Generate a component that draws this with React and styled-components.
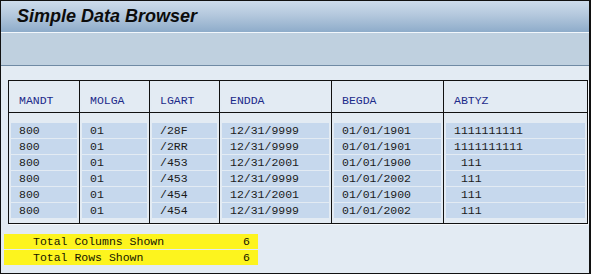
import React from "react";
import styled, { createGlobalStyle } from "styled-components";

const GlobalStyle = createGlobalStyle`
  html, body {
    margin: 0;
    padding: 0;
    background: #e3ebf3;
  }
  * {
    box-sizing: border-box;
  }
`;

const columns = [
  { key: "MANDT", width: "70px" },
  { key: "MOLGA", width: "70px" },
  { key: "LGART", width: "70px" },
  { key: "ENDDA", width: "112px" },
  { key: "BEGDA", width: "112px" },
  { key: "ABTYZ", width: "1fr" },
];

const rows = [
  ["800", "01", "/28F", "12/31/9999", "01/01/1901", "1111111111"],
  ["800", "01", "/2RR", "12/31/9999", "01/01/1901", "1111111111"],
  ["800", "01", "/453", "12/31/2001", "01/01/1900", " 111"],
  ["800", "01", "/453", "12/31/9999", "01/01/2002", " 111"],
  ["800", "01", "/454", "12/31/2001", "01/01/1900", " 111"],
  ["800", "01", "/454", "12/31/9999", "01/01/2002", " 111"],
];

const Frame = styled.div`
  width: 591px;
  height: 274px;
  border: 1px solid #111;
  border-right-width: 2px;
  display: flex;
  flex-direction: column;
  background: #e3ebf3;
  overflow: hidden;
`;

const TitleBar = styled.div`
  height: 32px;
  flex-shrink: 0;
  display: flex;
  align-items: center;
  padding-left: 16px;
  background: linear-gradient(#cddcec, #b4c8dd 45%, #8eacca);
  border-bottom: 1px solid #f2f7fc;
`;

const Title = styled.h1`
  margin: 0;
  font-family: "Liberation Sans", Arial, sans-serif;
  font-size: 18px;
  font-weight: bold;
  font-style: italic;
  color: #0c0c0c;
`;

const Toolbar = styled.div`
  height: 33px;
  flex-shrink: 0;
  background: #bfd0df;
  border-bottom: 1px solid #6f8aa4;
`;

const Content = styled.div`
  flex: 1;
  padding: 14px 0 0 7px;
  display: flex;
  flex-direction: column;
  gap: 10px;
`;

const Table = styled.div`
  width: 580px;
  display: grid;
  grid-template-columns: ${(p) => p.$template};
  border: 1px solid #111;
  box-shadow: 1px 1px 0 #f6f9fc;
  font-family: "Liberation Mono", "Courier New", monospace;
  font-size: 11.5px;
`;

const Column = styled.div`
  display: flex;
  flex-direction: column;
  border-left: ${(p) => (p.$first ? "none" : "1px solid #111")};
`;

const HeaderCell = styled.div`
  height: 32px;
  padding: 12px 0 0 10px;
  line-height: 15px;
  color: #1c2a8a;
  border-bottom: 1px solid #111;
`;

const Body = styled.div`
  display: flex;
  flex-direction: column;
  gap: 1px;
  padding: 10px 2px 5px 2px;
`;

const Band = styled.div`
  height: 15px;
  line-height: 15px;
  padding-left: 8px;
  background: #c6d8ed;
  color: #1b1b1b;
  white-space: pre;
`;

const Summary = styled.div`
  width: 254px;
  margin-left: -4px;
  display: flex;
  flex-direction: column;
  gap: 1px;
  font-family: "Liberation Mono", "Courier New", monospace;
  font-size: 11.5px;
`;

const SummaryRow = styled.div`
  height: 15px;
  line-height: 15px;
  display: flex;
  justify-content: space-between;
  padding: 0 8px 0 29px;
  background: #fdf41e;
  color: #151500;
`;

export default function App() {
  const template = columns.map((c) => c.width).join(" ");
  return (
    <>
      <GlobalStyle />
      <Frame>
        <TitleBar>
          <Title>Simple Data Browser</Title>
        </TitleBar>
        <Toolbar />
        <Content>
          <Table $template={template}>
            {columns.map((col, i) => (
              <Column key={col.key} $first={i === 0}>
                <HeaderCell>{col.key}</HeaderCell>
                <Body>
                  {rows.map((r, j) => (
                    <Band key={j}>{r[i]}</Band>
                  ))}
                </Body>
              </Column>
            ))}
          </Table>
          <Summary>
            <SummaryRow>
              <span>Total Columns Shown</span>
              <span>{columns.length}</span>
            </SummaryRow>
            <SummaryRow>
              <span>Total Rows Shown</span>
              <span>{rows.length}</span>
            </SummaryRow>
          </Summary>
        </Content>
      </Frame>
    </>
  );
}
